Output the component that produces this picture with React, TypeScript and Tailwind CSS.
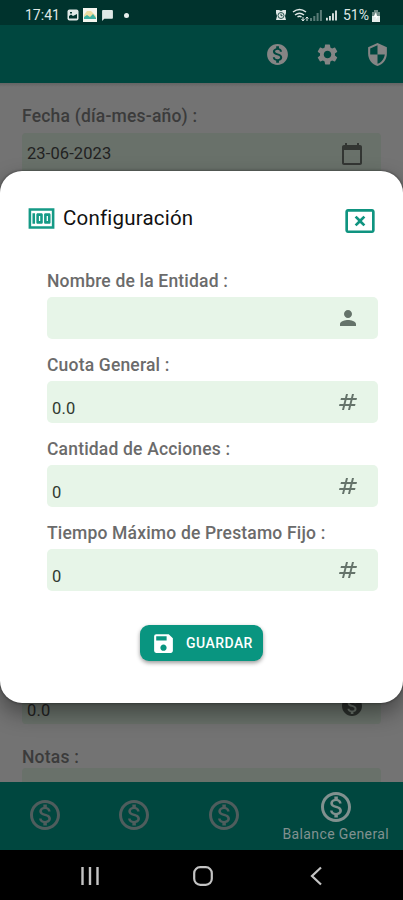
import {
  MdCalendarToday,
  MdCancelPresentation,
  MdChatBubble,
  MdMoney,
  MdMonetizationOn,
  MdNumbers,
  MdOutlineMonetizationOn,
  MdPerson,
  MdSave,
  MdSecurity,
  MdSettings,
} from "react-icons/md";

const FIELDS = [
  { label: "Nombre de la Entidad :", value: "", icon: MdPerson },
  { label: "Cuota General :", value: "0.0", icon: MdNumbers },
  { label: "Cantidad de Acciones :", value: "0", icon: MdNumbers },
  { label: "Tiempo Máximo de Prestamo Fijo :", value: "0", icon: MdNumbers },
] as const;

export default function App() {
  return (
    <div className="relative flex h-[900px] w-[403px] flex-col overflow-hidden bg-black font-['Roboto',sans-serif]">
      <StatusBar />

      <header className="flex h-[58px] items-center justify-end gap-[25px] bg-[#00473f] pr-[13px] text-[#858585]">
        <MdMonetizationOn className="size-[25px]" />
        <MdSettings className="size-[25px]" />
        <MdSecurity className="size-[25px]" />
      </header>

      <main className="flex h-[699px] flex-col justify-between bg-[#737373] bg-[linear-gradient(#646464,#737373_4px)] px-[22px]">
        <div>
          <p className="pt-[22px] text-[17.5px] leading-[22px] font-medium tracking-[0.2px] text-[#3b3b3b]">
            Fecha (día-mes-año) :
          </p>
          <div className="mt-1.5 flex h-[42px] items-center justify-between rounded-sm bg-[#69716a] pr-[17px] pl-[5px]">
            <span className="text-[16.5px] tracking-[0.1px] text-[#222]">23-06-2023</span>
            <MdCalendarToday className="size-6 text-[#333633]" />
          </div>
        </div>
        <div>
          <div className="flex h-[42px] items-end justify-between rounded-sm bg-[#69716a] pr-[17px] pb-[2px] pl-[5px]">
            <span className="text-[16.5px] leading-[22px] tracking-[0.2px] text-[#222]">0.0</span>
            <MdMonetizationOn className="mb-1 size-6 text-[#2b2f2c]" />
          </div>
          <p className="mt-[22px] text-[17.5px] leading-[22px] font-medium tracking-[0.2px] text-[#3b3b3b]">Notas :</p>
          <div className="h-[14px] rounded-t-sm bg-[#69716a]" />
        </div>
      </main>

      <nav className="flex h-[68px] items-center bg-[#00473f] text-[#4f5d5d]">
        <NavCoin />
        <NavCoin />
        <NavCoin />
        <div className="flex flex-1 flex-col items-center text-[#81918f]">
          <MdOutlineMonetizationOn className="size-9" />
          <span className="text-[14px] leading-[18px] tracking-[0.38px] whitespace-nowrap">Balance General</span>
        </div>
      </nav>

      <SystemBar />

      <ConfigDialog />
    </div>
  );
}

function NavCoin() {
  return (
    <div className="flex w-[89.5px] justify-center pb-0.5">
      <MdOutlineMonetizationOn className="size-9" />
    </div>
  );
}

function ConfigDialog() {
  return (
    <section className="absolute top-[171px] left-0 h-[532px] w-[403px] rounded-[22px] bg-white shadow-[0_10px_22px_rgba(0,0,0,0.4),0_0_3px_rgba(0,0,0,0.5)]">
      <div className="flex h-[68px] items-end pr-[27px] pl-[26px]">
        <MdMoney className="mb-[5px] size-[31px] text-[#159a86]" />
        <h1 className="mb-[6px] ml-[6px] flex-1 text-[20.5px] leading-[30px] tracking-[0.2px] text-[#111]">
          Configuración
        </h1>
        <MdCancelPresentation className="mb-[2px] size-8 text-[#0f9480]" />
      </div>

      <div className="mt-[31px] flex flex-col gap-[15px] pr-[25px] pl-[47px]">
        {FIELDS.map((field) => (
          <Field key={field.label} {...field} />
        ))}
      </div>

      <button className="mx-auto mt-[34px] flex h-9 w-[123px] items-center rounded-[9px] bg-[#099580] pl-[11px] text-white shadow-[0_2px_4px_rgba(0,0,0,0.4)]">
        <MdSave className="size-[25px]" />
        <span className="ml-[10px] text-[14px] font-medium tracking-[0.45px]">GUARDAR</span>
      </button>
    </section>
  );
}

function Field({
  label,
  value,
  icon: Icon,
}: {
  label: string;
  value: string;
  icon: React.ComponentType<{ className?: string }>;
}) {
  return (
    <div>
      <p className="text-[17.5px] leading-[22px] font-medium tracking-[0.18px] whitespace-nowrap text-[#6b6b6b]">
        {label}
      </p>
      <div className="mt-[5px] flex h-[42px] items-center justify-between rounded-[5px] bg-[#e7f5e8] pr-[18px] pl-[5px]">
        <span className="pt-[14px] text-[16.5px] leading-6 tracking-[0.2px] text-[#303a31]">{value}</span>
        <Icon className="size-6 text-[#65736a]" />
      </div>
    </div>
  );
}

function StatusBar() {
  return (
    <div className="flex h-[25px] items-center bg-[#00332d] pt-[5px] pr-[22px] pl-[25px] text-[#dfe8e6]">
      <span className="w-[42px] text-[14px] leading-4">17:41</span>
      <svg className="size-[12px]" viewBox="0 0 12 12">
        <rect x=".5" y=".5" width="11" height="11" rx="2" fill="currentColor" />
        <path d="M2 9.500V7l2-1.500L6 7l4-2v4.500zM3 3h2v1.500H3z" fill="#00332d" />
      </svg>
      <svg className="ml-[4px] size-[14px]" viewBox="0 0 14 14">
        <rect width="14" height="14" fill="#f4f5ee" />
        <path d="M1 7 4 3h4l5 5v2H1z" fill="#ecdca1" />
        <path d="M1 11V9l3-2 3 2 3-3 3 4v1z" fill="#3aafa0" />
      </svg>
      <MdChatBubble className="ml-[4px] size-[13px]" />
      <span className="ml-[10px] size-[5px] rounded-full bg-[#e7efed]" />

      <svg className="ml-auto size-[12px]" viewBox="0 0 12 12">
        <path d="M1 1h3l2 1 2-1h3v3l-1 3 1 4H1l1-4-1-3z" fill="currentColor" />
        <circle cx="6" cy="6.500" r="3" fill="none" stroke="#00332d" strokeWidth=".8" />
        <path d="M6 4.800v1.900h1.500" fill="none" stroke="#00332d" strokeWidth=".9" />
      </svg>
      <svg className="ml-[5px] h-[14px] w-[18px]" viewBox="0 0 18 14" fill="none" stroke="currentColor">
        <path d="M1 4q6.500-5 13 0M3 7q4.500-3.500 9 0M5.500 9q2-1.500 4 0" strokeWidth="1.500" />
        <path d="M11 9v4m-1.500-2 1.500 2 1.500-2M15 13V9m-1.500 1.500L15 9l1.500 1.500" />
      </svg>
      <Signal className="h-[12px] w-[12px] opacity-40" />
      <Signal className="ml-[4px] h-[12px] w-[11px]" />
      <span className="ml-[6px] text-[14px] leading-4">51%</span>
      <svg className="ml-[2px] h-[13px] w-[10px]" viewBox="0 0 10 13">
        <path d="M3 1h4v2h2v4H1V3h2z" fill="#6f8b86" />
        <path d="M1 7h8v6H1z" fill="#e5edeb" />
        <path d="M5 3 2.500 8H5l-.500 3L7.500 7H6z" fill="#fff" />
      </svg>
    </div>
  );
}

function Signal({ className }: { className: string }) {
  return (
    <svg className={className} viewBox="0 0 12 12" fill="currentColor">
      <path d="M0 9h2v3H0zM3.300 7h2v5h-2zM6.600 4h2v8h-2zM9.900 1h2v11h-2z" />
    </svg>
  );
}

function SystemBar() {
  return (
    <div className="flex h-[50px] items-center justify-center bg-black pt-0.5 pl-[3px] text-[#c4c4c4]">
      <svg className="h-[20px] w-[20px]" viewBox="0 0 20 20" stroke="currentColor" strokeWidth="2.400">
        <path d="M2.500 1v18M10 1v18M17.500 1v18" />
      </svg>
      <svg className="mx-[93px] size-[20px]" viewBox="0 0 20 20" fill="none" stroke="currentColor" strokeWidth="2.200">
        <rect x="1.200" y="1.200" width="17.600" height="17.600" rx="6" />
      </svg>
      <svg className="h-[20px] w-[20px]" viewBox="0 0 20 20" fill="none" stroke="currentColor" strokeWidth="2.200">
        <path d="M15 1.500 6 10l9 8.500" />
      </svg>
    </div>
  );
}
